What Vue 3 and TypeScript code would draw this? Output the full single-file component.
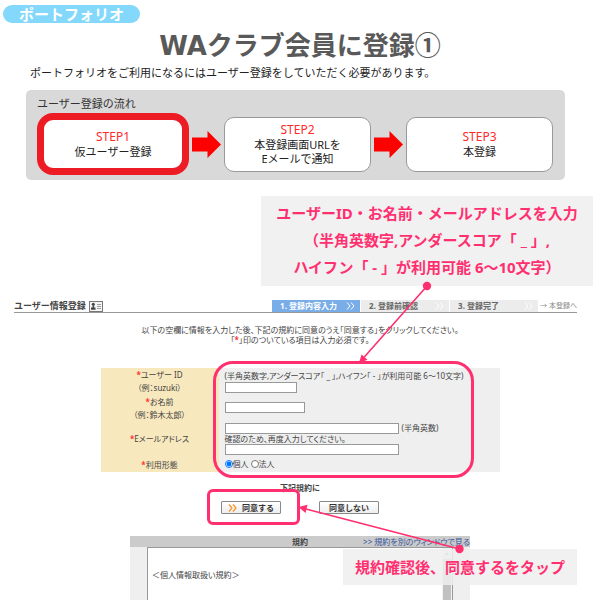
<script setup lang="ts">
import { ref } from 'vue'

interface Step {
  name: string
  lines: string[]
}

const steps: Step[] = [
  { name: 'STEP1', lines: ['仮ユーザー登録'] },
  { name: 'STEP2', lines: ['本登録画面URLを', 'Eメールで通知'] },
  { name: 'STEP3', lines: ['本登録'] },
]

const tabs: string[] = ['1. 登録内容入力', '2. 登録前確認', '3. 登録完了']

const userId = ref('')
const userName = ref('')
const email = ref('')
const emailConfirm = ref('')
const usage = ref('personal')
</script>

<template>
  <main class="page">
    <span class="category">ポートフォリオ</span>
    <h1 class="title">WA<span class="title-ja">クラブ会員に登録①</span></h1>
    <p class="lead">ポートフォリオをご利用になるにはユーザー登録をしていただく必要があります。</p>

    <section class="flow">
      <h2 class="flow-title">ユーザー登録の流れ</h2>
      <div class="steps">
        <template v-for="(step, i) in steps" :key="step.name">
          <svg v-if="i > 0" class="arrow" viewBox="0 0 29 27" aria-hidden="true">
            <path d="M0 6.500H15.500V0L29 13.500 15.500 27V20.500H0Z" fill="#ff0000" />
          </svg>
          <div class="step" :class="{ current: i === 0 }">
            <span class="step-name">{{ step.name }}</span>
            <span v-for="line in step.lines" :key="line">{{ line }}</span>
          </div>
        </template>
      </div>
    </section>

    <header class="form-head">
      <h2 class="form-title">ユーザー情報登録</h2>
      <svg class="card-icon" viewBox="0 0 14 11" aria-hidden="true">
        <rect x="0.500" y="0.500" width="13" height="10" fill="#f4f4f4" stroke="#777" />
        <circle cx="4.300" cy="3.300" r="1.500" fill="#444" />
        <path d="M3.500 4.500H5.100V6.500H6.500V8.800H2V6.500H3.500Z" fill="#444" />
        <path d="M8 3.500H12M8 5.500H12M8 7.500H12" stroke="#888" stroke-width="0.800" />
      </svg>
      <ol class="tabs">
        <li v-for="(tab, i) in tabs" :key="tab" class="tab" :class="{ active: i === 0 }">
          {{ tab }}
          <svg class="chevrons" viewBox="0 0 9 8" aria-hidden="true">
            <path d="M1 0.500 4 4 1 7.500M5 0.500 8 4 5 7.500" fill="none" stroke="#fff" />
          </svg>
        </li>
      </ol>
      <span class="next">→ 本登録へ</span>
    </header>

    <p class="intro">
      以下の空欄に情報を入力した後、下記の規約に同意のうえ「同意する」をクリックしてください。<br />
      「<b class="req">*</b>」印のついている項目は入力必須です。
    </p>

    <form class="form" @submit.prevent>
      <div class="fields">
        <label class="label" for="uid"><span><b class="req">*</b>ユーザー ID</span><span>（例：suzuki）</span></label>
        <div class="value">
          <span class="hint">(半角英数字,アンダースコア「 _ 」,ハイフン「 - 」が利用可能 6～10文字)</span>
          <input id="uid" v-model="userId" class="box short" type="text" />
        </div>
        <label class="label" for="uname"><span><b class="req">*</b>お名前</span><span>（例：鈴木太郎）</span></label>
        <div class="value">
          <input id="uname" v-model="userName" class="box medium" type="text" />
        </div>
        <label class="label" for="mail"><span><b class="req">*</b>Eメールアドレス</span></label>
        <div class="value">
          <span class="line"><input id="mail" v-model="email" class="box" type="text" />(半角英数)</span>
          <label class="confirm" for="mail2">確認のため、再度入力してください。</label>
          <input id="mail2" v-model="emailConfirm" class="box" type="text" />
        </div>
        <span class="label"><span><b class="req">*</b>利用形態</span></span>
        <div class="value radios">
          <label class="choice"><input v-model="usage" type="radio" name="usage" value="personal" />個人</label>
          <label class="choice"><input v-model="usage" type="radio" name="usage" value="company" />法人</label>
        </div>
      </div>

      <p class="agree-lead">下記規約に</p>
      <div class="actions">
        <button class="btn" type="submit">
          <svg class="go" viewBox="0 0 9 8" aria-hidden="true">
            <path d="M1 0.500 4 4 1 7.500M5 0.500 8 4 5 7.500" fill="none" stroke="#f5921e" stroke-width="1.200" />
          </svg>
          同意する
        </button>
        <button class="btn" type="button">同意しない</button>
      </div>
    </form>

    <section class="terms">
      <div class="terms-head">
        <h3 class="terms-title">規約</h3>
        <a class="terms-link" href="#terms">&gt;&gt; 規約を別のウィンドウで見る</a>
      </div>
      <div class="terms-body">
        <div id="terms" class="terms-frame">
          <p class="terms-text">＜個人情報取扱い規約＞</p>
          <div class="track" aria-hidden="true"><i class="up"></i><i class="thumb"></i></div>
        </div>
      </div>
    </section>

    <div class="notes">
      <p class="note note-input">ユーザーID・お名前・メールアドレスを入力<br />（半角英数字,アンダースコア「 _ 」,<br />ハイフン「 - 」が利用可能 6～10文字）</p>
      <p class="note note-agree">規約確認後、同意するをタップ</p>
      <div class="ring ring-input"></div>
      <div class="ring ring-agree"></div>
      <svg class="leaders" viewBox="0 0 600 600" aria-hidden="true">
        <g fill="#ff2f70" stroke="none">
          <circle cx="427" cy="286" r="4.200" />
          <circle cx="459.500" cy="549" r="4.200" />
          <path d="M359 363 361.500 354.500 367.500 359.800Z" />
          <path d="M298.500 507 307.500 504.800 305.500 513Z" />
        </g>
        <path d="M427 286 363 358.500M459.500 549 305 508.800" fill="none" stroke="#ff2f70" stroke-width="1.600" />
      </svg>
    </div>
  </main>
</template>

<style>
body {
  margin: 0;
  background: #fff;
}
</style>

<style scoped>
.page {
  position: relative;
  box-sizing: border-box;
  display: flex;
  flex-direction: column;
  min-height: 100vh;
  padding-top: 5px;
  overflow: hidden;
  color: #444;
  font-family: "Noto Sans", "Noto Sans CJK JP", sans-serif;
  font-size: 8px;
  line-height: 12px;
}
h1, h2, h3, p, ol {
  margin: 0;
  padding: 0;
}
.category {
  align-self: flex-start;
  margin-left: 3px;
  padding: 0 16px;
  border-radius: 9px;
  background: #83d8fb;
  color: #fff;
  font-size: 15px;
  font-weight: 700;
  line-height: 18px;
}
.title {
  margin-top: 5px;
  color: #595959;
  font-family: "DejaVu Sans", sans-serif;
  font-size: 26px;
  line-height: 32px;
  text-align: center;
}
.title-ja {
  font-family: "Noto Sans CJK JP", sans-serif;
}
.lead {
  margin: 3px 30px 0;
  color: #222;
  font-size: 11px;
  line-height: 16px;
}
.flow {
  box-sizing: border-box;
  margin: 9px 35px 0 26px;
  padding: 5px 12px 5px 11px;
  border-radius: 5px;
  background: #d9d9d9;
}
.flow-title {
  color: #333;
  font-size: 11px;
  font-weight: 400;
  line-height: 18px;
}
.steps {
  display: grid;
  grid-template-columns: 152fr 29px 147fr 29px 147fr;
  align-items: center;
  column-gap: 3px;
}
.step {
  box-sizing: border-box;
  display: flex;
  flex-direction: column;
  align-items: center;
  justify-content: center;
  min-height: 55px;
  border: 1px solid #999;
  border-radius: 10px;
  background: #fff;
  color: #222;
  font-size: 11px;
  line-height: 14px;
}
.step.current {
  min-height: 62px;
  border: 7px solid #ed1c24;
  border-radius: 16px;
}
.step-name {
  color: #ff2a2a;
  font-size: 12px;
  line-height: 16px;
}
.arrow {
  width: 29px;
  height: 27px;
}
.form-head {
  display: flex;
  align-items: center;
  margin: 120px 23px 0 14px;
  border-bottom: 1px solid #999;
}
.form-title {
  font-size: 9px;
  line-height: 12px;
}
.card-icon {
  width: 14px;
  height: 11px;
  margin-left: 3px;
}
.tabs {
  display: flex;
  gap: 1px;
  margin-left: auto;
  list-style: none;
}
.tab {
  box-sizing: border-box;
  display: flex;
  align-items: center;
  justify-content: space-between;
  width: 88px;
  padding: 0 5px 0 8px;
  background: #ececec;
  color: #666;
  font-weight: 700;
}
.tab.active {
  background: #79ade8;
  color: #fff;
}
.chevrons, .go {
  width: 9px;
  height: 8px;
}
.next {
  margin-left: 2px;
  color: #888;
  font-size: 7px;
  font-feature-settings: "palt";
}
.intro {
  margin-top: 12px;
  line-height: 10px;
  text-align: center;
  font-feature-settings: "palt";
}
.req {
  color: #f33;
}
.form {
  display: flex;
  flex-direction: column;
  align-items: center;
  margin-top: 23px;
}
.fields {
  display: grid;
  grid-template-columns: 118px 281px;
  grid-template-rows: 26px 27px 35px 16px;
  background: #efefef;
  font-feature-settings: "palt";
}
.label {
  display: flex;
  flex-direction: column;
  align-items: center;
  justify-content: center;
  background: #f8e8bd;
  line-height: 13px;
}
.value {
  display: flex;
  flex-direction: column;
  align-items: flex-start;
  justify-content: center;
  padding-left: 6px;
  white-space: nowrap;
}
.box {
  box-sizing: border-box;
  width: 174px;
  height: 11px;
  padding: 0 2px;
  border: 1px solid #999;
  background: #fff;
  font: inherit;
}
.short {
  width: 72px;
}
.medium {
  width: 80px;
}
.line {
  display: flex;
  align-items: center;
  gap: 3px;
}
.confirm {
  line-height: 10px;
}
.radios {
  flex-direction: row;
  align-items: center;
  justify-content: flex-start;
  gap: 2px;
}
.choice {
  display: flex;
  align-items: center;
}
.choice input {
  width: 8px;
  height: 8px;
  margin: 0;
}
.agree-lead {
  margin-top: 10px;
  font-weight: 700;
}
.actions {
  display: flex;
  gap: 38px;
  margin-top: 7px;
}
.btn {
  box-sizing: border-box;
  display: flex;
  align-items: center;
  justify-content: center;
  gap: 5px;
  width: 60px;
  height: 13px;
  padding: 0;
  border: 1px solid #888;
  border-radius: 1px;
  background: linear-gradient(#fff, #eee);
  color: #333;
  font: inherit;
  font-weight: 700;
}
.terms {
  flex: 1;
  display: flex;
  flex-direction: column;
  width: 340px;
  margin: 22px auto 0;
}
.terms-head {
  display: grid;
  grid-template-columns: 1fr auto 1fr;
  background: #cbcbcb;
  line-height: 11px;
}
.terms-title {
  grid-column: 2;
  font-size: 8px;
}
.terms-link {
  justify-self: end;
  color: #33559b;
  text-decoration: none;
  white-space: nowrap;
  font-feature-settings: "palt";
}
.terms-body {
  flex: 1;
  display: flex;
  padding: 0 17px;
  background: #efefef;
}
.terms-frame {
  flex: 1;
  display: flex;
  justify-content: space-between;
  border: 1px solid #999;
  border-bottom: 0;
  background: #fff;
}
.terms-text {
  padding: 21px 4px;
  font-feature-settings: "palt";
}
.track {
  display: flex;
  flex-direction: column;
  align-items: center;
  width: 10px;
  background: #f1f1f1;
}
.up {
  margin: 4px 0;
  border: 2px solid transparent;
  border-top: 0;
  border-bottom: 3px solid #999;
}
.thumb {
  flex: 1;
  width: 8px;
  background: #c1c1c1;
}
.notes {
  position: absolute;
  top: 0;
  left: 50%;
  width: 600px;
  height: 600px;
  margin-left: -300px;
  pointer-events: none;
}
.note {
  position: absolute;
  box-sizing: border-box;
  background: rgba(239, 239, 239, 0.85);
  color: #ff2f70;
  font-size: 15px;
  font-weight: 700;
  text-align: center;
  white-space: nowrap;
}
.note-input {
  top: 196px;
  left: 261px;
  width: 332px;
  padding: 4px 0 5px;
  line-height: 27px;
}
.note-agree {
  top: 549px;
  left: 343px;
  width: 234px;
  line-height: 36px;
}
.ring {
  position: absolute;
  box-sizing: border-box;
  border: 3px solid #ff2f70;
}
.ring-input {
  top: 361px;
  left: 213px;
  width: 261px;
  height: 117px;
  border-radius: 20px;
}
.ring-agree {
  top: 489px;
  left: 207px;
  width: 93px;
  height: 36px;
  border-radius: 6px;
}
.leaders {
  position: absolute;
  top: 0;
  left: 0;
  width: 600px;
  height: 600px;
}
</style>
